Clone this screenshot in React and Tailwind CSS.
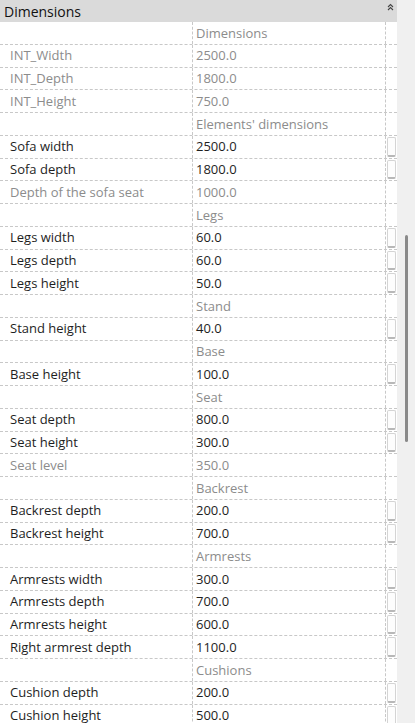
import React from "react";

// s = section caption, d = read-only parameter, e = editable parameter
const rows = [
  ["s", "Dimensions"],
  ["d", "INT_Width", "2500.0"],
  ["d", "INT_Depth", "1800.0"],
  ["d", "INT_Height", "750.0"],
  ["s", "Elements' dimensions"],
  ["e", "Sofa width", "2500.0"],
  ["e", "Sofa depth", "1800.0"],
  ["d", "Depth of the sofa seat", "1000.0"],
  ["s", "Legs"],
  ["e", "Legs width", "60.0"],
  ["e", "Legs depth", "60.0"],
  ["e", "Legs height", "50.0"],
  ["s", "Stand"],
  ["e", "Stand height", "40.0"],
  ["s", "Base"],
  ["e", "Base height", "100.0"],
  ["s", "Seat"],
  ["e", "Seat depth", "800.0"],
  ["e", "Seat height", "300.0"],
  ["d", "Seat level", "350.0"],
  ["s", "Backrest"],
  ["e", "Backrest depth", "200.0"],
  ["e", "Backrest height", "700.0"],
  ["s", "Armrests"],
  ["e", "Armrests width", "300.0"],
  ["e", "Armrests depth", "700.0"],
  ["e", "Armrests height", "600.0"],
  ["e", "Right armrest depth", "1100.0"],
  ["s", "Cushions"],
  ["e", "Cushion depth", "200.0"],
  ["e", "Cushion height", "500.0"],
];

function Row({ kind, label, value }) {
  const editable = kind === "e";
  const section = kind === "s";
  return (
    <div className="flex h-[22.75px] shrink-0 border-b border-dashed border-[#c8c8c8]">
      <div
        className={`w-[193px] shrink-0 border-r border-dashed border-[#c8c8c8] pl-[10px] pt-[1px] flex items-center ${
          kind === "d" ? "text-[#8c8c8c]" : "text-[#1e1e1e]"
        }`}
      >
        {section ? "" : label}
      </div>
      <div
        className={`w-[193px] shrink-0 border-r border-dashed border-[#c8c8c8] pl-[3px] pt-[1px] flex items-center ${
          editable ? "text-[#1e1e1e]" : "text-[#8c8c8c]"
        }`}
      >
        {section ? label : value}
      </div>
      <div className="w-[11px] shrink-0 flex items-stretch py-[1px] pl-[1px]">
        {editable && (
          <div className="w-[9px] rounded-[2px] border border-[#d4d4d4] border-b-[2px] border-b-[#b8b8b8] bg-[#fdfdfd]" />
        )}
      </div>
    </div>
  );
}

export default function App() {
  return (
    <div
      className="flex w-[415px] h-[723px] overflow-hidden bg-white text-[13px]"
      style={{ fontFamily: '"Open Sans", "Noto Sans", sans-serif' }}
    >
      <div className="w-[397px] shrink-0 flex flex-col">
        <div className="h-[22px] shrink-0 bg-[#dadada] flex items-center justify-between pl-[4px] pr-[3px] text-[14px] text-[#111]">
          <span>Dimensions</span>
          <svg width="7" height="8" viewBox="0 0 7 8" className="self-start mt-[3px]">
            <path d="M1 4 L3.5 1.5 L6 4 M1 7 L3.5 4.5 L6 7" stroke="#444" strokeWidth="1.1" fill="none" />
          </svg>
        </div>
        {rows.map(([kind, label, value]) => (
          <Row key={label} kind={kind} label={label} value={value} />
        ))}
      </div>
      <div className="flex-1 bg-[#f0f0f0] flex justify-center">
        <div className="mt-[235px] w-[3px] h-[207px] rounded-full bg-[#8a8a8a]" />
      </div>
    </div>
  );
}
